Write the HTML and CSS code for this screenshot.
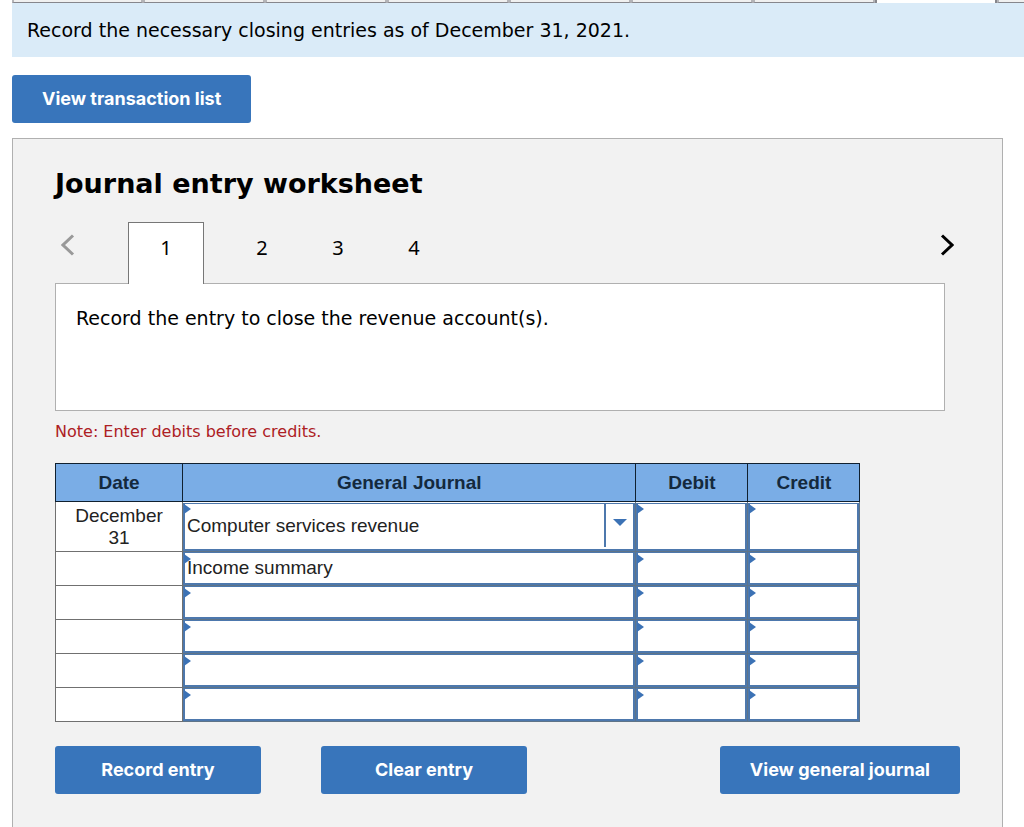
FILE: index.html
```html
<!DOCTYPE html>
<html lang="en">
<head>
    <meta charset="UTF-8">
    <meta name="viewport" content="width=device-width, initial-scale=1.0">
    <title>Journal entry worksheet</title>
    <link rel="stylesheet" href="styles.css">
</head>
<body>
    <div class="tab-strip" aria-hidden="true">
        <div class="strip-tab first"></div>
        <div class="strip-tab"></div>
        <div class="strip-tab"></div>
        <div class="strip-tab"></div>
        <div class="strip-tab"></div>
        <div class="strip-tab"></div>
        <div class="strip-tab"></div>
        <div class="strip-tab active"></div>
        <div class="strip-tab last"></div>
    </div>
    <main class="content">
        <p class="banner">Record the necessary closing entries as of December 31, 2021.</p>
        <button class="btn" type="button">View transaction list</button>

        <section class="worksheet">
            <h1>Journal entry worksheet</h1>

            <div class="pager">
                <button class="arrow prev" type="button" aria-label="Previous" disabled>
                    <svg width="14" height="22" viewBox="0 0 14 22"><path d="M12 1.5L2 11l10 9.5"/></svg>
                </button>
                <div class="pages">
                    <button class="page current" type="button">1</button>
                    <button class="page" type="button">2</button>
                    <button class="page" type="button">3</button>
                    <button class="page" type="button">4</button>
                </div>
                <button class="arrow next" type="button" aria-label="Next">
                    <svg width="14" height="22" viewBox="0 0 14 22"><path d="M2 1.5L12 11 2 20.5"/></svg>
                </button>
            </div>

            <div class="instruction">Record the entry to close the revenue account(s).</div>
            <p class="note">Note: Enter debits before credits.</p>

            <table class="journal">
                <colgroup>
                    <col class="col-date">
                    <col class="col-journal">
                    <col class="col-amount">
                    <col class="col-amount">
                </colgroup>
                <thead>
                    <tr><th>Date</th><th>General Journal</th><th>Debit</th><th>Credit</th></tr>
                </thead>
                <tbody>
                    <tr class="tall">
                        <td>December 31</td>
                        <td class="entry">
                            <select aria-label="General journal, line 1"><option>Computer services revenue</option></select>
                            <span class="drop"><svg width="14" height="8" viewBox="0 0 14 8"><path d="M0 0h14L7 7z"/></svg></span>
                        </td>
                        <td class="entry"><input type="text" aria-label="Debit, line 1"></td>
                        <td class="entry"><input type="text" aria-label="Credit, line 1"></td>
                    </tr>
                    <tr>
                        <td></td>
                        <td class="entry"><input type="text" aria-label="General journal, line 2" value="Income summary"></td>
                        <td class="entry"><input type="text" aria-label="Debit, line 2"></td>
                        <td class="entry"><input type="text" aria-label="Credit, line 2"></td>
                    </tr>
                    <tr>
                        <td></td>
                        <td class="entry"><input type="text" aria-label="General journal, line 3"></td>
                        <td class="entry"><input type="text" aria-label="Debit, line 3"></td>
                        <td class="entry"><input type="text" aria-label="Credit, line 3"></td>
                    </tr>
                    <tr>
                        <td></td>
                        <td class="entry"><input type="text" aria-label="General journal, line 4"></td>
                        <td class="entry"><input type="text" aria-label="Debit, line 4"></td>
                        <td class="entry"><input type="text" aria-label="Credit, line 4"></td>
                    </tr>
                    <tr>
                        <td></td>
                        <td class="entry"><input type="text" aria-label="General journal, line 5"></td>
                        <td class="entry"><input type="text" aria-label="Debit, line 5"></td>
                        <td class="entry"><input type="text" aria-label="Credit, line 5"></td>
                    </tr>
                    <tr>
                        <td></td>
                        <td class="entry"><input type="text" aria-label="General journal, line 6"></td>
                        <td class="entry"><input type="text" aria-label="Debit, line 6"></td>
                        <td class="entry"><input type="text" aria-label="Credit, line 6"></td>
                    </tr>
                </tbody>
            </table>

            <div class="actions">
                <button class="btn" type="button">Record entry</button>
                <button class="btn" type="button">Clear entry</button>
                <button class="btn view" type="button">View general journal</button>
            </div>
        </section>
    </main>
</body>
</html>
```

FILE: styles.css
```css
* {
    box-sizing: border-box;
}

body {
    margin: 0;
    min-height: 100vh;
    display: flex;
    flex-direction: column;
    background-color: #fff;
    color: #000;
    font-family: Verdana, "DejaVu Sans", sans-serif;
    font-size: 19px;
}

button {
    border: 0;
    padding: 0;
    cursor: pointer;
}

/* bottom edge of the section tabs */
.tab-strip {
    display: flex;
    height: 3px;
    padding-left: 12px;
}

.strip-tab {
    flex: 0 0 122px;
    background-color: #f0f0f0;
    border: solid #b4b4b8;
    border-width: 0 2px;
    border-bottom: 1px solid #86868c;
}

.strip-tab.first {
    flex: 1;
}

.strip-tab.active {
    background-color: #fff;
    border-color: #86868c;
    border-bottom: 0;
}

.strip-tab.last {
    flex-basis: 27px;
    border-right: 0;
}

.content {
    flex: 1;
    display: flex;
    flex-direction: column;
    align-items: flex-start;
    padding-left: 12px;
}

.banner {
    width: 100%;
    margin: 0 0 18px;
    padding: 15px;
    line-height: 24px;
    background-color: #daebf8;
}

.btn {
    min-width: 206px;
    height: 48px;
    padding: 0 30px 2px;
    border-radius: 3px;
    background-color: #3875bb;
    color: #fff;
    font-family: Inter, sans-serif;
    font-size: 18px;
    font-weight: 700;
}

.worksheet {
    flex: 1;
    align-self: stretch;
    margin: 15px 21px 0 0;
    padding: 30px 42px;
    border: 1px solid #b0b0b0;
    border-bottom: 0;
    background-color: #f2f2f2;
}

h1 {
    margin: 0 0 23px;
    font-size: 27px;
    line-height: 30px;
}

.pager {
    display: flex;
    align-items: center;
    height: 61px;
    padding: 0 6px;
}

.arrow {
    height: 22px;
    margin-bottom: 16px;
    background: none;
}

.arrow path {
    fill: none;
    stroke: #000;
    stroke-width: 3;
}

.arrow.prev path {
    stroke: #999;
}

.pages {
    flex: 1;
    display: flex;
    align-self: stretch;
    padding-left: 53px;
}

.page {
    width: 76px;
    height: 62px;
    padding-bottom: 12px;
    background: none;
    color: #000;
    font-family: "Noto Sans", sans-serif;
    font-size: 20px;
}

.page.current {
    position: relative;
    margin-right: 20px;
    border: 1px solid #777;
    border-bottom: 0;
    background-color: #fff;
}

.instruction {
    min-height: 128px;
    margin-right: 15px;
    padding: 22px 20px;
    border: 1px solid #b0b0b0;
    background-color: #fff;
    line-height: 24px;
}

.note {
    margin: 11px 0 21px;
    color: #ad2024;
    font-size: 16px;
    line-height: 20px;
}

.journal {
    width: 89%;
    table-layout: fixed;
    border-collapse: collapse;
    background-color: #fff;
    color: #222;
    font-family: Arial, "Liberation Sans", sans-serif;
    font-size: 19px;
    line-height: 22px;
}

.col-date {
    width: 127px;
}

.col-amount {
    width: 112px;
}

.journal th {
    height: 38px;
    padding: 0;
    border: 1px solid #10202f;
    background-color: #7aade6;
    color: #14293d;
}

.journal td {
    height: 34px;
    padding: 0 8px;
    border: 1px solid #707070;
    text-align: center;
}

.journal .tall td {
    height: 50px;
}

.journal .entry {
    position: relative;
    padding: 0;
    border-color: #5f7488;
}

.entry input,
.entry select {
    display: block;
    width: 100%;
    height: 33px;
    margin: 0;
    padding: 0 2px;
    border: 2px solid #4d78ad;
    border-top-width: 1px;
    border-radius: 0;
    appearance: none;
    background-color: #fff;
    color: #222;
    font: inherit;
}

.tall input,
.tall select {
    height: 48px;
}

/* blue corner marker */
.entry::before {
    content: "";
    position: absolute;
    top: 2px;
    left: 1px;
    border: 5px solid transparent;
    border-left: 7px solid #3c72b5;
    border-right: 0;
}

.drop {
    position: absolute;
    top: 1px;
    right: 2px;
    bottom: 4px;
    width: 29px;
    padding: 16px 0 0 7px;
    border-left: 2px solid #4d78ad;
    line-height: 8px;
    text-align: left;
    pointer-events: none;
}

.drop svg {
    display: block;
    fill: #3c72b5;
}

.actions {
    display: flex;
    gap: 60px;
    margin-top: 24px;
}

.actions .view {
    margin-left: auto;
}
```
